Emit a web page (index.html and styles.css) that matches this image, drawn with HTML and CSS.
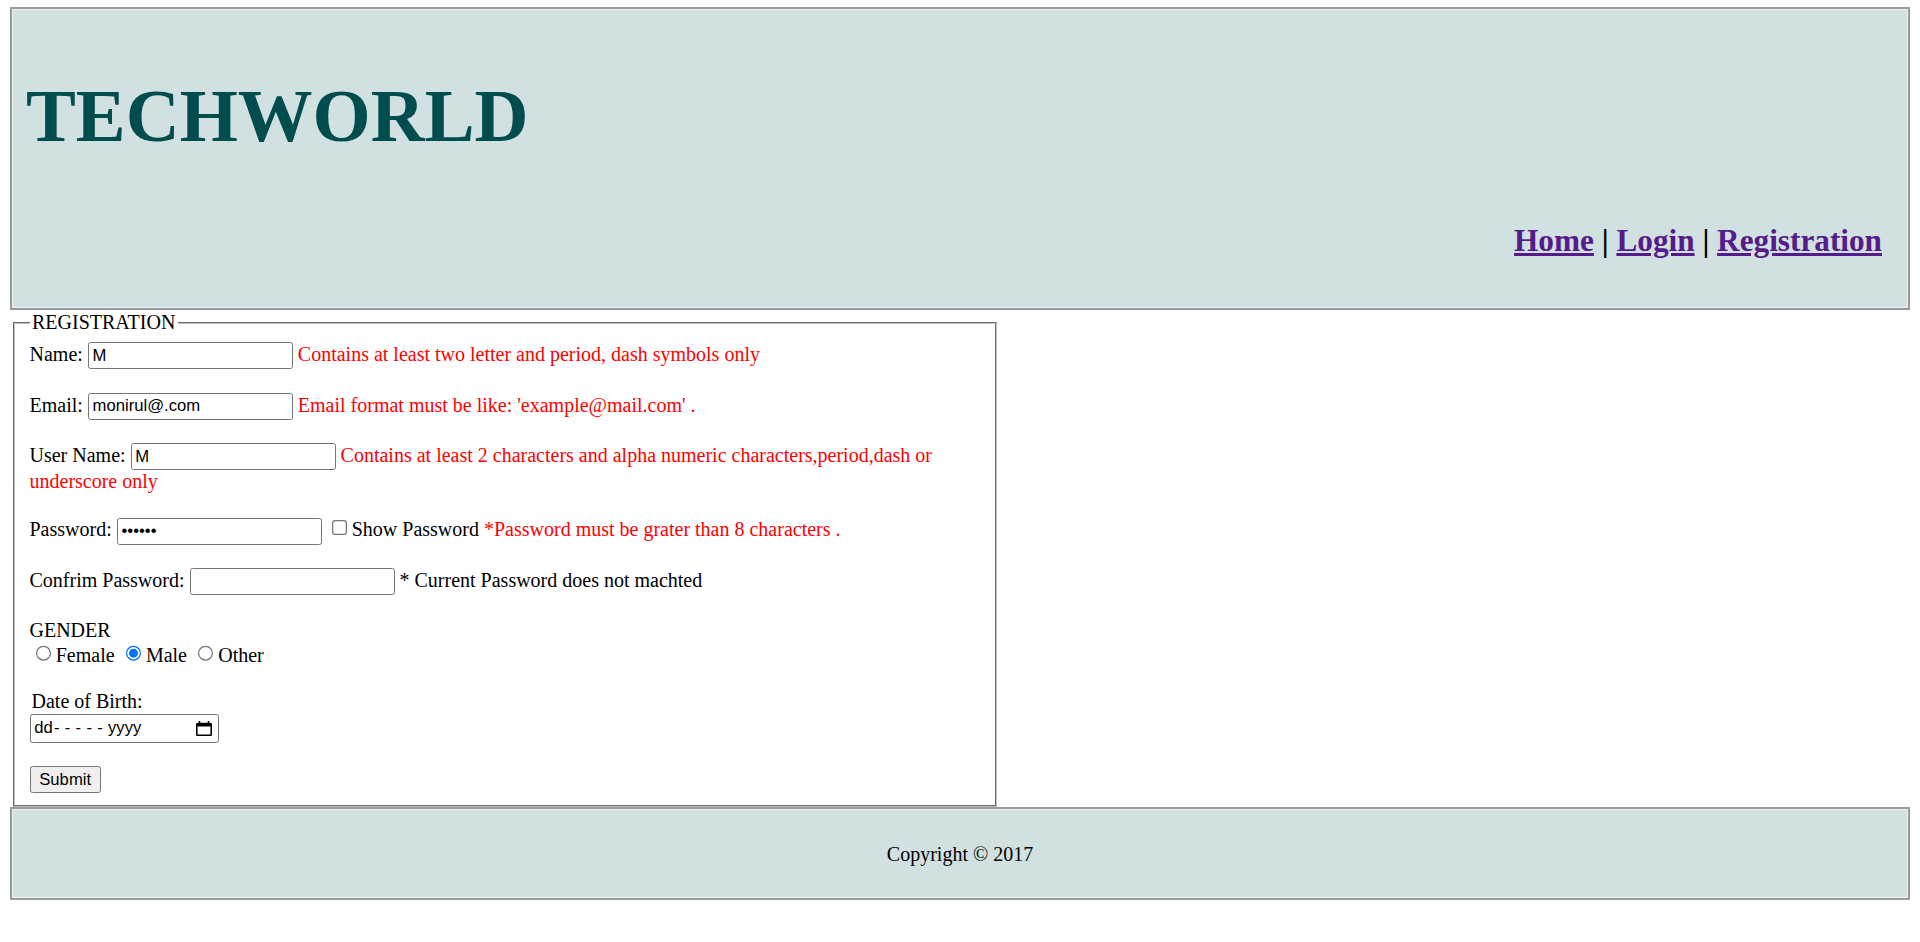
FILE: index.html
```html
<!DOCTYPE html>
<html lang="en">
<head>
<meta charset="utf-8">
<title>TECHWORLD - Registration</title>
<link rel="stylesheet" href="styles.css">
</head>
<body>
<header class="site-header">
  <h1 class="brand">TECHWORLD</h1>
  <nav class="nav"><a href="#">Home</a> | <a href="#">Login</a> | <a href="#">Registration</a></nav>
</header>
<form class="reg-form">
  <fieldset class="reg">
    <legend>REGISTRATION</legend>
    <div class="row">Name: <input class="field" type="text" value="M"> <span class="err">Contains at least two letter and period, dash symbols only</span></div>
    <div class="row">Email: <input class="field" type="text" value="monirul@.com"> <span class="err">Email format must be like: 'example@mail.com' .</span></div>
    <div class="row">User Name: <input class="field" type="text" value="M"> <span class="err">Contains at least 2 characters and alpha numeric characters,period,dash or underscore only</span></div>
    <div class="row">Password: <input class="field" type="password" value="abcdef"> <input type="checkbox">Show Password <span class="err">*Password must be grater than 8 characters .</span></div>
    <div class="row">Confrim Password: <input class="field" type="password" value=""> * Current Password does not machted</div>
    <div class="row">
      <div>GENDER</div>
      <div><label><input type="radio" name="gender">Female</label> <label><input type="radio" name="gender" checked>Male</label> <label><input type="radio" name="gender">Other</label></div>
    </div>
    <div class="row">
      <div class="dob-label">Date of Birth:</div>
      <div class="date-field"><span>dd<span class="date-dash">-----</span>yyyy</span><svg class="cal-icon" viewBox="0 0 15 15" aria-hidden="true"><path d="M13.5 2.5h-1V1H11v1.5H4V1H2.5v1.5h-1C.67 2.5 0 3.17 0 4v9.5c0 .83.67 1.5 1.5 1.5h12c.83 0 1.5-.67 1.5-1.5V4c0-.83-.67-1.5-1.5-1.5zm0 11h-12V6h12v7.5z" fill="#000"/></svg></div>
    </div>
    <div class="row"><button class="btn" type="button">Submit</button></div>
  </fieldset>
</form>
<footer class="site-footer">Copyright © 2017</footer>
</body>
</html>
```

FILE: styles.css
```css
html {
  zoom: 1.25;
}

body {
  margin: 5.6px 8px 8px;
  font-family: "Liberation Serif", "Times New Roman", serif;
  font-size: 16px;
  color: #000;
  background: #fff;
}

.site-header {
  background: #d1e1e1;
  border: 1.6px solid #9a9a9a;
  box-shadow: inset 0 0 0 0.8px #eef2f2;
  padding: 50.8px 20.8px 39.7px 11.2px;
}

.brand {
  margin: 0 0 52px;
  font-size: 59.8px;
  line-height: 68px;
  font-weight: bold;
  color: #014c4c;
}

.nav {
  text-align: right;
  font-size: 25px;
  line-height: 28.75px;
  font-weight: bold;
}

.nav a {
  color: #551a8b;
  text-decoration: underline;
}

.reg-form {
  margin: 0;
}

.reg {
  width: 50%;
  margin: 1px 2px 0;
  padding: 6.4px 0.75em 9.4px;
  border: 2px groove #c0c0c0;
}

.reg legend {
  padding: 0 2px;
}

.row {
  margin-bottom: 18.7px;
}

.row:last-child {
  margin-bottom: 0;
}

.err {
  color: #ff0000;
}

.field {
  box-sizing: border-box;
  width: 164px;
  height: 21.6px;
  margin: 0;
  padding: 2px 3px;
  border: 1px solid #767676;
  border-radius: 2px;
  background: #fff;
  color: #000;
  font: 13.333px "Liberation Sans", Arial, sans-serif;
}

.dob-label {
  padding-left: 1.6px;
}

.date-field {
  display: flex;
  align-items: center;
  justify-content: space-between;
  box-sizing: border-box;
  width: 151.2px;
  height: 23.2px;
  margin-top: 0.6px;
  padding: 0 4.8px 0 3px;
  border: 1px solid #767676;
  border-radius: 2px;
  font: 13.333px "Liberation Sans", Arial, sans-serif;
  color: #000;
}

.date-dash {
  margin-left: 1px;
  letter-spacing: 4.2px;
}

.cal-icon {
  width: 12.8px;
  height: 12.8px;
}

.btn {
  margin: 0;
  padding: 2px 7px;
  border: 1px solid #767676;
  border-radius: 2px;
  background: #efefef;
  color: #000;
  font: 13.333px "Liberation Sans", Arial, sans-serif;
}

.site-footer {
  background: #d1e1e1;
  border: 1.6px solid #9a9a9a;
  box-shadow: inset 0 0 0 0.8px #eef2f2;
  padding: 27.4px 0 25.8px;
  text-align: center;
}
```
